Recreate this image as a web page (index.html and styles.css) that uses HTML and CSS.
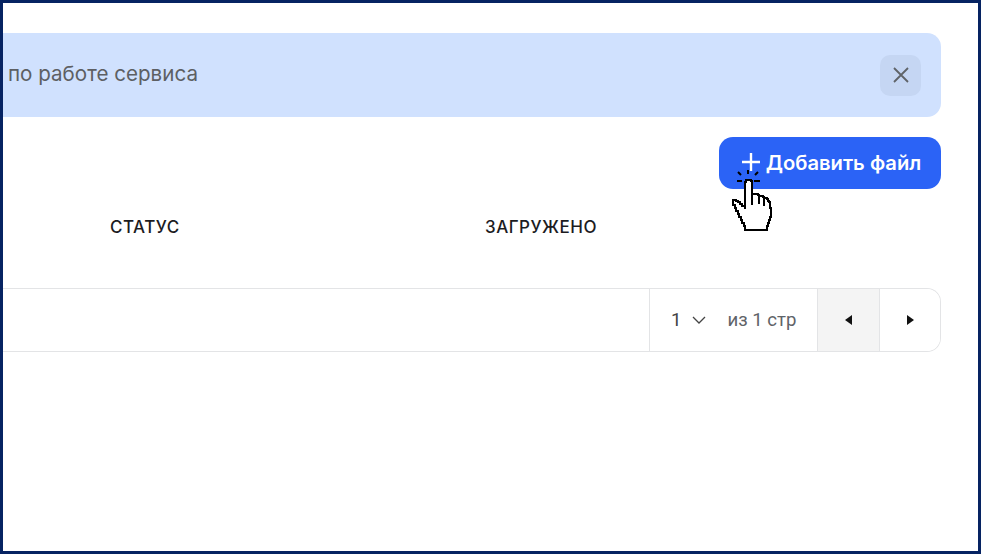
FILE: index.html
```html
<!DOCTYPE html>
<html lang="ru">
<head>
<meta charset="utf-8">
<title>Файлы</title>
<link rel="stylesheet" href="styles.css">
</head>
<body>
<div class="frame">
  <div class="banner">
    <span class="banner-text">по работе сервиса</span>
    <button class="close" aria-label="Закрыть">
      <svg width="16" height="16" viewBox="0 0 16 16" fill="none" stroke="#5f6368" stroke-width="1.8"><path d="M1 1l14 14M15 1L1 15"/></svg>
    </button>
  </div>
  <div class="toolbar">
    <button class="add">
      <svg width="18" height="18" viewBox="0 0 18 18" fill="none" stroke="#fff" stroke-width="2.4"><path d="M9 0v18M0 9h18"/></svg>
      <span>Добавить файл</span>
    </button>
    <svg class="hand" width="48" height="70" viewBox="0 0 48 70" fill="#fff" stroke="#000" stroke-width="2">
      <path fill="none" d="M8 5l3 3M18 3v4M28 5l-3 3M7 14h5M24 14h6"/>
      <path shape-rendering="crispEdges" d="M15 42V15h1v-2h5v1h1v13h6v1h1v1h4v1h1v1h3v1h1v2h1v1h1v6h1v9h-1v3h-1v3h-1v3h-1v4H15v-4h-1v-3h-2v-3h-1v-3H9v-3H8v-3H6v-3H5v-3H3v-5h3v1h2v1h2v2h2v2h3z"/>
      <path fill="none" d="M22 27v11M29 29v8M34 31v8"/>
    </svg>
  </div>
  <div class="thead">
    <span class="col status">СТАТУС</span>
    <span class="col loaded">ЗАГРУЖЕНО</span>
  </div>
  <div class="pager">
    <div class="pages">
      <span class="num">1</span>
      <svg class="chev" width="14" height="8" viewBox="0 0 14 8" fill="none" stroke="#444" stroke-width="1.3"><path d="M1 1l6 6 6-6"/></svg>
      <span class="of">из 1 стр</span>
    </div>
    <button class="nav prev" aria-label="Назад"><svg width="8" height="10" viewBox="0 0 8 10"><path d="M7 0v10L0 5z" fill="#111"/></svg></button>
    <button class="nav next" aria-label="Вперёд"><svg width="8" height="10" viewBox="0 0 8 10"><path d="M1 0v10l7-5z" fill="#111"/></svg></button>
  </div>
</div>
</body>
</html>
```

FILE: styles.css
```css
* { box-sizing: border-box; }
html, body { margin: 0; padding: 0; background: #fff; }
body { width: 982px; height: 555px; overflow: hidden; font-family: Inter, "Noto Sans", sans-serif; }
.frame {
  width: 981px;
  height: 554px;
  border: 3px solid #062362;
  padding-top: 30px;
  padding-right: 37px;
  background: #fff;
}
.banner {
  height: 84px;
  background: #d0e1fe;
  border-radius: 0 14px 14px 0;
  display: flex;
  align-items: center;
  justify-content: space-between;
  padding: 0 20px 0 5px;
}
.banner-text { font-size: 20.6px; line-height: 24px; padding-bottom: 2px; color: #5d5f63; }
.close {
  width: 41px;
  height: 41px;
  border: 0;
  border-radius: 10px;
  background: #c5d6f3;
  display: flex;
  align-items: center;
  justify-content: center;
  padding: 0;
}
.toolbar {
  position: relative;
  display: flex;
  justify-content: flex-end;
  margin-top: 20px;
}
.add {
  width: 222px;
  height: 52px;
  border: 0;
  border-radius: 14px;
  background: #2b63f6;
  color: #fff;
  font: 600 20.2px Inter, sans-serif;
  display: flex;
  align-items: center;
  justify-content: center;
  gap: 6px;
  padding: 0 0 2px 3px;
}
.hand { position: absolute; left: 727px; top: 30px; }
.thead {
  position: relative;
  display: flex;
  height: 99px;
  padding-top: 28px;
  padding-left: 107px;
  font-size: 17px;
  font-weight: 500;
  color: #1c1c1f;
  line-height: 20px;
}
.col { letter-spacing: 0.5px; }
.status { width: 375px; }
.pager {
  height: 64px;
  border: 1px solid #e3e4e6;
  border-left: 0;
  border-radius: 0 14px 14px 0;
  display: flex;
  justify-content: flex-end;
  overflow: hidden;
}
.pages {
  width: 168px;
  border-left: 1px solid #e3e4e6;
  display: flex;
  align-items: center;
  padding-left: 21px;
  font-size: 18.6px;
  font-family: Roboto, sans-serif;
  color: #444;
}
.chev { margin-left: 11px; }
.of { margin-left: 21px; color: #5f6368; }
.nav {
  width: 62px;
  border: 0;
  border-left: 1px solid #e3e4e6;
  background: #fff;
  display: flex;
  align-items: center;
  justify-content: center;
  padding: 0;
}
.prev { background: #f4f4f4; }
.next { width: 61px; }
```
